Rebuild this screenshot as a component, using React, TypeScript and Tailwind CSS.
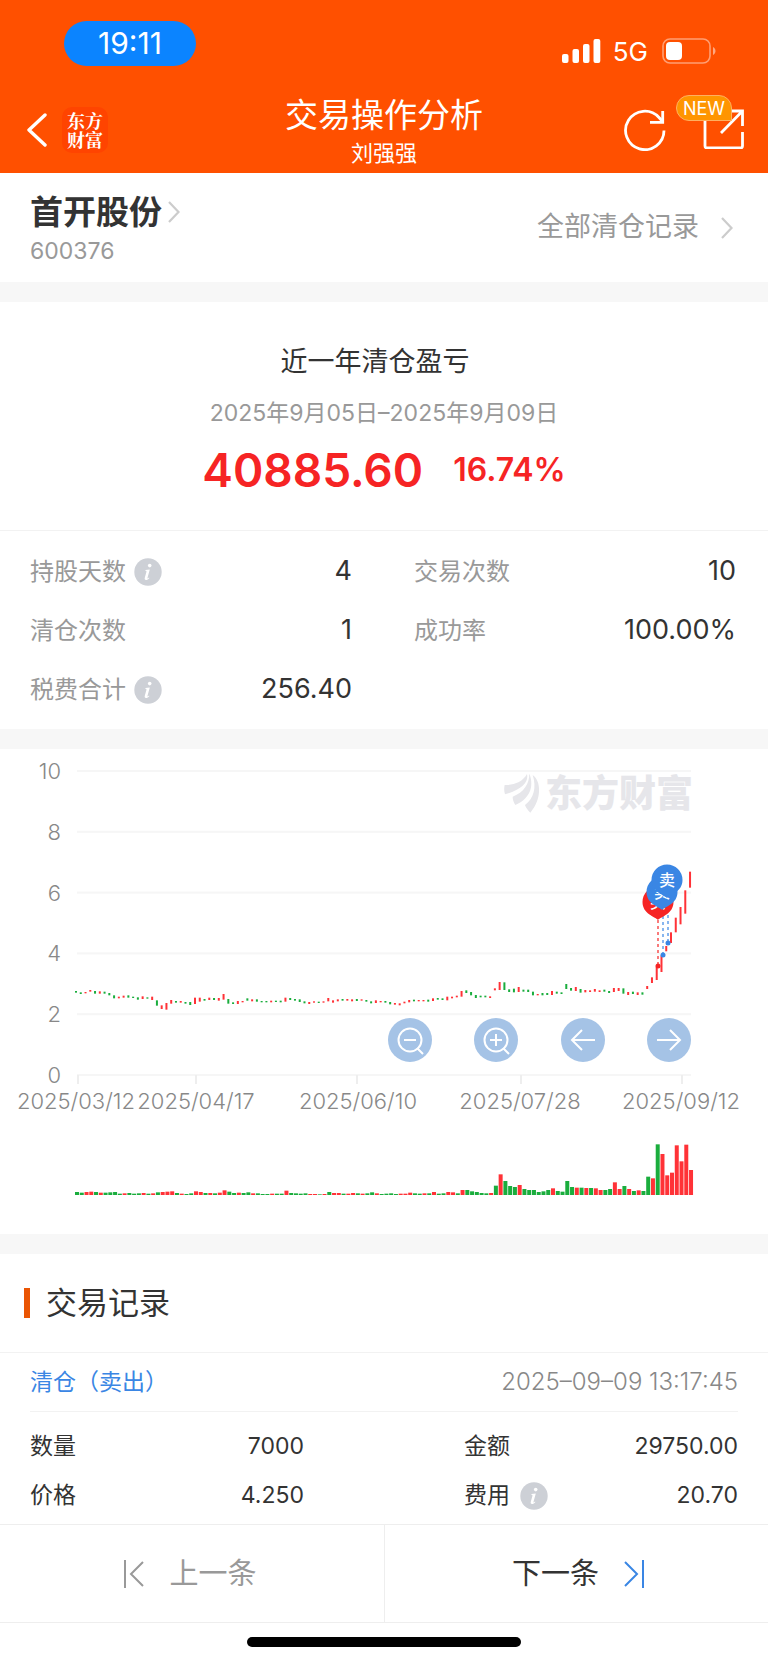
import React from "react";

const FONT = "font-['Inter','Noto_Sans_CJK_SC',sans-serif]";

type Bar = [number, number, "r" | "g"];

const CHART_TOP = 749;
const X0 = 77;
const STEP = 4.76;

const parse = (s: string) => s.trim().split(/\s+/);

// Candles as "color top-bottom", in thirds of a chart unit below the 740 line.
const CANDLES: Bar[] = parse(`
g753-758 g757-762 r756-760 r750-755 g753-761 r754-761 g755-761 g759-766 g766-775 r770-775
r767-773 g766-773 g770-774 g772-779 r769-777 g772-776 r770-780 g781-797 r796-807 r789-809
r780-791 g783-788 r783-788 g786-791 g786-795 r773-792 r773-785 g777-782 r773-780 g774-780
r774-782 r762-779 g777-791 g787-792 r783-792 r783-787 g775-782 r778-784 g778-785 g783-787
g783-787 r782-787 g782-786 g782-787 r773-785 g774-780 g777-782 g778-786 g784-790 r786-792
r784-788 g785-789 r784-788 r774-784 r781-788 r778-784 g777-782 r777-782 r778-784 g777-783
r778-782 g780-785 g784-790 r781-789 r783-787 g783-788 g786-793 r789-794 r790-796 r785-790
r780-787 g779-784 r780-784 r780-784 g779-785 r775-783 g774-779 g775-780 r770-781 r770-775
r767-772 r753-770 g751-759 g756-766 g765-774 g767-772 g767-772 r769-774 r745-751 r726-750
g727-750 g748-756 g746-757 r741-756 g749-755 g749-756 g755-766 r762-766 g759-766 g759-765
r753-765 g755-761 g757-762 g732-747 g744-752 r741-753 g747-758 r750-757 r751-756 r747-755
r751-756 g749-755 g753-759 r744-756 r744-753 g745-761 r756-765 g755-762 r757-765 g757-764
r738-747 r712-729 r680-720 r646-696 r618-634 r577-609 r533-577 r501-553 r451-521 r395-443
`).map((t) => {
  const [a, b] = t.slice(1).split("-").map(Number);
  return [740 + a / 3 - CHART_TOP, 740 + b / 3 - CHART_TOP, t[0] as "r" | "g"];
});

const VOLUMES = parse(`
g9 g7 r9 r10 g9 r7 g7 g8 g9 g4 r5 g6 g4 g5 r6 g4 r5 g8 r9 r10
r11 g6 r4 g3 g5 r11 r9 g6 r6 g5 r7 r14 g10 g6 r7 g6 g8 r5 g5 g3
g3 r4 g4 g4 r13 g6 g5 g4 g5 r3 r3 g2 r3 g9 r6 r6 g4 r4 r6 g5
r4 g5 g8 r5 g3 g4 g5 g3 r4 r4 r7 g5 g4 r5 g5 r9 g4 g5 r9 r8
g5 r15 g15 g11 g9 g6 g5 r6 g28 r62 g42 g27 g24 r30 g18 g15 g15 g9 g11 g15
r20 g12 g10 g42 g24 r22 g22 r21 g21 r20 r15 g15 g18 r38 r18 g27 r18 g12 r14 g12
g55 r50 g152 r123 r59 r67 r149 r101 r151 r75
`).map((t) => ({ color: t[0], h: Number(t.slice(1)) / 3 }));

const fillOf = (c: string) => (c === "r" ? "#ff3237" : "#1aad3d");

function Chevron({ className }: { className: string }) {
  return (
    <svg viewBox="0 0 12 22" className={className} fill="none" stroke="currentColor" strokeWidth="2.2" aria-hidden="true">
      <path d="M1 1l9.5 10L1 21" />
    </svg>
  );
}

function InfoButton({ label }: { label: string }) {
  return (
    <button type="button" aria-label={label} className="size-7 shrink-0">
      <svg viewBox="0 0 28 28" className="size-7" aria-hidden="true">
        <circle cx="14" cy="14" r="13.7" fill="#cdd0d6" />
        <circle cx="15.7" cy="7.6" r="1.8" fill="#fff" />
        <path d="M11.400 12l4.400-.6-2.300 8.400c-.2.900.2.900 1.500-.3l.4.400c-1.200 1.500-2.200 2-3.400 2-1.200 0-1.600-.8-1.200-2.200l1.600-5.700c.2-.9 0-1.200-1.200-1.300z" fill="#fff" />
      </svg>
    </button>
  );
}

function Header() {
  return (
    <header className="bg-[#ff5000] text-white">
      <div className="flex h-[88px] items-start justify-between pr-[52px] pl-16">
        <div className="mt-[21px] flex h-[45px] w-[132px] items-center justify-center rounded-full bg-[#0b84ff] text-[30px]">
          19:11
        </div>
        <div className="mt-[34px] flex h-[34px] items-center">
          <svg viewBox="0 0 39 24" className="h-6 w-[39px]" fill="#fff" aria-label="信号">
            <rect x="0" y="15" width="6.500" height="9" rx="2" />
            <rect x="10.500" y="10" width="6.500" height="14" rx="2" />
            <rect x="21" y="5" width="6.500" height="19" rx="2" />
            <rect x="31.500" y="0" width="6.800" height="24" rx="2" />
          </svg>
          <span className="ml-3 text-[26px]">5G</span>
          <svg viewBox="0 0 54 26" className="ml-3.5 h-[26px] w-[54px]" fill="none" aria-label="电量">
            <rect x="1" y="1" width="47" height="24" rx="7" stroke="#fff" strokeOpacity=".45" strokeWidth="1.600" />
            <rect x="4" y="4" width="16" height="18" rx="4" fill="#fff" />
            <path d="M51 9c3.300 1.500 3.300 6.500 0 8z" fill="#fff" fillOpacity=".5" />
          </svg>
        </div>
      </div>
      <div className="grid h-[85px] grid-cols-[1fr_auto_1fr] items-start">
        <div className="mt-[19px] flex items-center pl-[27px]">
          <button type="button" aria-label="返回" className="flex h-[46px] w-[35px] items-center">
            <svg viewBox="0 0 20 34" className="h-[34px] w-5" fill="none" stroke="#fff" strokeWidth="3.400" strokeLinecap="round" strokeLinejoin="round" aria-hidden="true">
              <path d="M18 2L2 17l16 15" />
            </svg>
          </button>
          <div className="flex size-[46px] flex-col items-center justify-center rounded-[10px] bg-[#ff4400] font-['Noto_Serif_CJK_SC','Noto_Sans_CJK_SC',serif] text-[18px] leading-[19px] font-bold">
            <span>东方</span>
            <span>财富</span>
          </div>
        </div>
        <div className="mt-1 flex flex-col items-center">
          <h1 className="text-[33px] leading-[46px]">交易操作分析</h1>
          <p className="text-[22px] leading-[30px]">刘强强</p>
        </div>
        <div className="mt-[19px] flex justify-end gap-[36px] pr-[23px]">
          <button type="button" aria-label="刷新" className="size-[44px]">
            <svg viewBox="0 0 44 44" className="size-[44px]" fill="none" stroke="#fff" strokeWidth="2.800" aria-hidden="true">
              <path d="M41 23.500A19.200 19.200 0 1 1 36 10.500l3.500 4" />
              <path d="M39.700 4v11.300H27" />
            </svg>
          </button>
          <button type="button" aria-label="分享" className="relative size-[42px]">
            <svg viewBox="0 0 42 42" className="size-[42px]" fill="none" stroke="#fff" strokeWidth="2.800" aria-hidden="true">
              <path d="M2 12v27a2 2 0 0 0 2 2h33.500a2 2 0 0 0 2-2V25M28 4h11.500v15M39 4.500L18 26" />
            </svg>
            <span className="absolute -top-[12px] -left-[27px] flex h-[26px] w-[56px] items-center justify-center rounded-full rounded-br-none border border-[#ffb060] bg-[#ff9500] text-[18px]">
              NEW
            </span>
          </button>
        </div>
      </div>
    </header>
  );
}

function StockBar() {
  return (
    <section className="flex h-[109px] items-center justify-between pr-[35px] pl-[30px]">
      <div>
        <a href="#stock" className="flex items-center gap-1.5">
          <h2 className="text-[33px] leading-[46px] font-bold text-[#333]">首开股份</h2>
          <Chevron className="h-[22px] w-3 text-[#ccc]" />
        </a>
        <p className="text-[23px] leading-8 text-[#999]">600376</p>
      </div>
      <a href="#all" className="flex items-center gap-[22px] text-[27px] text-[#999]">
        全部清仓记录
        <Chevron className="h-[22px] w-3 text-[#ccc]" />
      </a>
    </section>
  );
}

function Summary() {
  return (
    <section className="flex h-[229px] flex-col items-center border-b border-[#f2f2f2] pt-10">
      <h3 className="pr-[18px] text-[27px] leading-[40px] text-[#333]">近一年清仓盈亏</h3>
      <p className="mt-[15px] text-[23px] leading-8 text-[#999]">2025年9月05日–2025年9月09日</p>
      <p className="mt-[11px] flex items-center gap-[30px] text-[#f62424]">
        <strong className="text-[46px] leading-[60px] font-semibold">40885.60</strong>
        <strong className="text-[32px] leading-[60px] font-semibold">16.74%</strong>
      </p>
    </section>
  );
}

function Stat({ label, value, info }: { label: string; value: string; info?: boolean }) {
  return (
    <div className="flex h-[59px] items-center justify-between">
      <dt className="flex items-center gap-2 text-[24px] text-[#999]">
        {label}
        {info && <InfoButton label={label + "说明"} />}
      </dt>
      <dd className="text-[27px] text-[#333]">{value}</dd>
    </div>
  );
}

function Stats() {
  return (
    <dl className="grid h-[198px] grid-cols-2 content-start gap-x-[62px] pt-[11px] pr-8 pl-[30px]">
      <Stat label="持股天数" value="4" info />
      <Stat label="交易次数" value="10" />
      <Stat label="清仓次数" value="1" />
      <Stat label="成功率" value="100.00%" />
      <Stat label="税费合计" value="256.40" info />
    </dl>
  );
}

function Pin({ x, y, color, text }: { x: number; y: number; color: string; text: string }) {
  return (
    <g transform={`translate(${x} ${y})`}>
      <path d="M0 18C-3 14.500-15.500 12-15.500 0a15.500 15.500 0 1 1 31 0C15.500 12 3 14.500 0 18z" fill={color} />
      <text y="6" textAnchor="middle" fontSize="16" fontWeight="500" fill="#fff">
        {text}
      </text>
    </g>
  );
}

function Chart() {
  const dates: [string, number, number][] = [
    ["2025/03/12", 76, 78],
    ["2025/04/17", 196, 196],
    ["2025/06/10", 358, 357],
    ["2025/07/28", 520, 521],
    ["2025/09/12", 681, 682],
  ];
  const marks: [number, number, number, string][] = [
    [658, 171, 217, "#f62424"],
    [663, 161, 206, "#3a86e4"],
    [668, 148, 194, "#3a86e4"],
  ];
  const circle = "flex size-[44px] items-center justify-center rounded-full bg-[#a5c3e6] text-white";
  return (
    <section className="relative">
      <svg viewBox="0 0 768 485" className="block w-full" role="img" aria-label="股价走势">
        {[10, 8, 6, 4, 2, 0].map((v, i) => (
          <g key={v}>
            <rect x="77" y={21 + i * 60.8} width="614" height="2" fill="#f6f6f6" />
            <text x="61" y={30 + i * 60.8} textAnchor="end" fontSize="22" fontWeight="300" fill="#888">
              {v}
            </text>
          </g>
        ))}
        {dates.map(([d, x, tick]) => (
          <g key={d}>
            <rect x={tick - 1} y="326" width="2" height="9" fill="#eee" />
            <text x={x} y="360" textAnchor="middle" fontSize="22" fontWeight="300" fill="#888">
              {d}
            </text>
          </g>
        ))}
        <g fill="#e6e6ea">
          <g transform="translate(480 11) scale(.3333)">
            <path d="M75 103C72 94 72 84 74 75C100 76 128 66 141 42C146 66 128 88 75 103z" />
            <path d="M106 135C101 127 98 119 98 110C132 96 148 72 148 41C160 70 158 112 106 135z" />
            <path d="M151 158C144 151 138 144 135 135C162 115 170 82 158 45C184 62 186 118 151 158z" />
          </g>
          <text x="545" y="58" fontSize="37" fontWeight="900">
            东方财富
          </text>
        </g>
        {CANDLES.map(([a, b, c], i) => (
          <rect key={i} x={X0 + i * STEP - 2} y={a} width="2" height={b - a} fill={fillOf(c)} />
        ))}
        {VOLUMES.map(({ color, h }, i) => (
          <rect key={i} x={X0 + i * STEP - 2} y={446 - h} width="4" height={h} fill={fillOf(color)} />
        ))}
        {marks.map(([x, from, to, color]) => (
          <g key={x} stroke={color} fill={color}>
            <path d={`M${x} ${from}V${to}`} strokeWidth="1.200" strokeDasharray="3 3" fill="none" />
            <circle cx={x} cy={to} r="2.500" stroke="none" />
          </g>
        ))}
        <Pin x={658} y={153} color="#f62424" text="买" />
        <Pin x={662} y={143} color="#3a86e4" text="卖" />
        <Pin x={667} y={131} color="#3a86e4" text="卖" />
      </svg>
      <div className="absolute top-[55.5%] left-[50.5%] flex w-[39.500%] justify-between">
        <button type="button" aria-label="缩小" className={circle}>
          <svg viewBox="0 0 44 44" className="size-[44px]" fill="none" stroke="currentColor" strokeWidth="2" aria-hidden="true">
            <circle cx="22" cy="22" r="11.500" />
            <path d="M16 22h12M29 30l6 6" />
          </svg>
        </button>
        <button type="button" aria-label="放大" className={circle}>
          <svg viewBox="0 0 44 44" className="size-[44px]" fill="none" stroke="currentColor" strokeWidth="2" aria-hidden="true">
            <circle cx="22" cy="22" r="11.500" />
            <path d="M16 22h12M22 16v12M29 30l6 6" />
          </svg>
        </button>
        <button type="button" aria-label="左移" className={circle}>
          <svg viewBox="0 0 44 44" className="size-[44px]" fill="none" stroke="currentColor" strokeWidth="2" aria-hidden="true">
            <path d="M34 22H11M21 12L11 22l10 10" />
          </svg>
        </button>
        <button type="button" aria-label="右移" className={circle}>
          <svg viewBox="0 0 44 44" className="size-[44px]" fill="none" stroke="currentColor" strokeWidth="2" aria-hidden="true">
            <path d="M10 22h23M23 12l10 10-10 10" />
          </svg>
        </button>
      </div>
    </section>
  );
}

function Detail({ label, value, info }: { label: string; value: string; info?: boolean }) {
  return (
    <div className="flex h-[49px] items-center justify-between">
      <dt className="flex items-center gap-2.5">
        {label}
        {info && <InfoButton label={label + "说明"} />}
      </dt>
      <dd>{value}</dd>
    </div>
  );
}

function Records() {
  return (
    <section>
      <div className="flex h-[99px] items-center gap-4 border-b border-[#f2f2f2] pl-6">
        <span className="h-[30px] w-1.5 bg-[#ea5504]" />
        <h3 className="text-[31px] text-[#333]">交易记录</h3>
      </div>
      <article className="px-[30px]">
        <div className="flex h-[59px] items-center justify-between border-b border-[#f2f2f2]">
          <span className="text-[23px] text-[#3a86e4]">清仓（卖出）</span>
          <time className="text-[24px] font-light text-[#888]">2025–09–09 13:17:45</time>
        </div>
        <dl className="grid grid-cols-[274px_274px] justify-between pt-[10px] pb-1 text-[23px] text-[#333]">
          <Detail label="数量" value="7000" />
          <Detail label="金额" value="29750.00" />
          <Detail label="价格" value="4.250" />
          <Detail label="费用" value="20.70" info />
        </dl>
      </article>
    </section>
  );
}

function Pager() {
  return (
    <nav className="grid h-[99px] grid-cols-2 border-y border-[#eee] text-[29px]">
      <button type="button" className="flex items-center justify-center gap-6 pr-1 text-[#999]">
        <svg viewBox="0 0 22 28" className="h-7 w-[22px]" fill="none" stroke="currentColor" strokeWidth="2" aria-hidden="true">
          <path d="M2 0v28M20 2L8 14l12 12" />
        </svg>
        上一条
      </button>
      <button type="button" className="flex items-center justify-center gap-6 border-l border-[#eee] pl-1 text-[#333]">
        下一条
        <svg viewBox="0 0 22 28" className="h-7 w-[22px] text-[#3a86e4]" fill="none" stroke="currentColor" strokeWidth="2" aria-hidden="true">
          <path d="M20 0v28M2 2l12 12L2 26" />
        </svg>
      </button>
    </nav>
  );
}

export default function App() {
  return (
    <div className={`${FONT} bg-white`}>
      <Header />
      <main>
        <StockBar />
        <div className="h-5 bg-[#f7f7f7]" />
        <Summary />
        <Stats />
        <div className="h-5 bg-[#f7f7f7]" />
        <Chart />
        <div className="h-5 bg-[#f7f7f7]" />
        <Records />
      </main>
      <Pager />
      <div className="flex h-10 justify-center pt-3.5">
        <div className="h-2.5 w-[274px] rounded-full bg-black" />
      </div>
    </div>
  );
}
